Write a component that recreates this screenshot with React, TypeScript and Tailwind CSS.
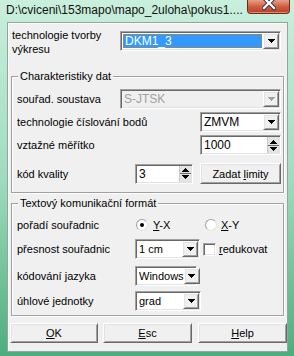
const sunken =
  "border border-t-[#a0a0a0] border-l-[#a0a0a0] border-r-white border-b-white shadow-[inset_1px_1px_0_#696969,inset_-1px_-1px_0_#e3e3e3] p-[1px]";
const raised =
  "border border-t-white border-l-white border-r-[#696969] border-b-[#696969] shadow-[inset_1px_1px_0_#e3e3e3,inset_-1px_-1px_0_#a0a0a0] bg-[#f0f0f0]";

function Arrow({ disabled = false }: { disabled?: boolean }) {
  return (
    <svg width="7" height="4" viewBox="0 0 7 4" shapeRendering="crispEdges">
      <path d="M0 0h7v1h-1v1h-1v1h-1v1h-1v-1h-1v-1h-1v-1h-1z" fill={disabled ? "#a0a0a0" : "#000"} />
    </svg>
  );
}

function DropButton({ disabled = false }: { disabled?: boolean }) {
  return (
    <div className={`${raised} w-[16px] h-full flex items-center justify-center shrink-0`}>
      <Arrow disabled={disabled} />
    </div>
  );
}

function SpinArrows() {
  return (
    <div className="w-[12px] h-full shrink-0 flex flex-col bg-[#e3e3e3] border-l border-[#c8c8c8]">
      <div className="flex-1 flex items-end justify-center pb-[1px] border-b border-[#696969]">
        <svg width="7" height="4" viewBox="0 0 7 4" shapeRendering="crispEdges">
          <path d="M3 0h1v1h1v1h1v1h1v1h-7v-1h1v-1h1v-1h1z" fill="#000" />
        </svg>
      </div>
      <div className="flex-1 flex items-start justify-center pt-[1px]">
        <svg width="7" height="4" viewBox="0 0 7 4" shapeRendering="crispEdges">
          <path d="M0 0h7v1h-1v1h-1v1h-1v1h-1v-1h-1v-1h-1v-1h-1z" fill="#000" />
        </svg>
      </div>
    </div>
  );
}

function Radio({ checked }: { checked: boolean }) {
  return (
    <span className="w-[12px] h-[12px] rounded-full bg-white border border-t-[#a0a0a0] border-l-[#a0a0a0] border-r-[#e3e3e3] border-b-[#e3e3e3] flex items-center justify-center">
      {checked && <span className="w-[4px] h-[4px] rounded-full bg-black" />}
    </span>
  );
}

export default function App() {
  return (
    <div className="w-[294px] h-[356px] flex flex-col bg-gradient-to-b from-[#c9efdd] via-[#a0dbbf] to-[#4cad7d] font-['Liberation_Sans',Arial,sans-serif] text-black overflow-hidden">
      {/* Title bar */}
      <div className="h-[22px] flex items-start justify-between pl-[6px] pr-[4px] shrink-0">
        <span className="text-[12px] leading-[14px] mt-[3px] text-[#111]">
          {"D:\\cviceni\\153mapo\\mapo_2uloha\\pokus1...."}
        </span>
        <div className="w-[43px] h-[14px] rounded-b-[4px] border border-t-0 border-[#6e2a1c] bg-gradient-to-b from-[#e6a088] via-[#cf5f42] to-[#b8401f] flex justify-center shadow-[inset_0_-1px_0_#e08a70]">
          <svg width="14" height="11" viewBox="0 0 14 11">
            <path d="M2 -2L12 8M12 -2L2 8" stroke="#3a3a48" strokeWidth="4.2" strokeLinecap="square" />
            <path d="M2 -2L12 8M12 -2L2 8" stroke="#fff" strokeWidth="2.2" strokeLinecap="square" />
          </svg>
        </div>
      </div>

      {/* Client area */}
      <div className="ml-[7px] w-[281px] h-[330px] bg-[#f0f0f0] border border-[#8fa89b] shadow-[inset_1px_1px_0_#fff] flex flex-col">
        <div className="flex items-start mt-[5px] ml-[4px]">
          <div className="w-[108px] text-[11px] leading-[14px]">
            technologie tvorby
            <br />
            výkresu
          </div>
          <div className={`mt-[3px] w-[161px] h-[20px] flex bg-white ${sunken}`}>
            <div className="flex-1 m-[1px] flex items-center bg-[#3399ff] border border-dotted border-[#d08000] text-white text-[12px] pl-[1px]">
              DKM1_3
            </div>
            <DropButton />
          </div>
        </div>

        {/* Charakteristiky dat */}
        <div className="relative ml-[3px] mt-[20px] w-[273px] h-[117px] border border-[#a0a0a0] shadow-[inset_1px_1px_0_#fff,1px_1px_0_#fff] pt-[12px] pl-[5px] pr-[2px] text-[11px] leading-[14px]">
          <span className="absolute -top-[8px] left-[6px] px-[2px] bg-[#f0f0f0]">Charakteristiky dat</span>

          <div className="flex items-center h-[20px]">
            <span className="w-[103px]">souřad. soustava</span>
            <div className={`w-[161px] h-[20px] flex bg-[#f0f0f0] ${sunken}`}>
              <div className="flex-1 flex items-center pl-[2px] text-[12px] text-[#a0a0a0]">S-JTSK</div>
              <DropButton disabled />
            </div>
          </div>

          <div className="flex items-center h-[20px] mt-[3px]">
            <span className="flex-1">technologie číslování bodů</span>
            <div className={`w-[81px] h-[20px] flex bg-white ${sunken}`}>
              <div className="flex-1 flex items-center pl-[2px] text-[12px]">ZMVM</div>
              <DropButton />
            </div>
          </div>

          <div className="flex items-center h-[20px] mt-[3px]">
            <span className="flex-1">vztažné měřítko</span>
            <div className={`w-[81px] h-[20px] flex bg-white ${sunken}`}>
              <div className="flex-1 flex items-center pl-[2px] text-[12px]">1000</div>
              <SpinArrows />
            </div>
          </div>

          <div className="flex items-center h-[21px] mt-[8px]">
            <span className="w-[118px]">kód kvality</span>
            <div className={`w-[58px] h-[20px] flex bg-white ${sunken}`}>
              <div className="flex-1 flex items-center pl-[2px] text-[12px]">3</div>
              <SpinArrows />
            </div>
            <button className={`ml-auto w-[81px] h-[21px] ${raised} flex items-center justify-center`}>
              Zadat <span className="underline underline-offset-[1px] ml-[3px]">l</span>imity
            </button>
          </div>
        </div>

        {/* Textový komunikační formát */}
        <div className="relative ml-[3px] mt-[10px] w-[273px] h-[113px] border border-[#a0a0a0] shadow-[inset_1px_1px_0_#fff,1px_1px_0_#fff] pt-[11px] pl-[5px] pr-[2px] text-[11px] leading-[14px]">
          <span className="absolute -top-[8px] left-[6px] px-[2px] bg-[#f0f0f0]">Textový komunikační formát</span>

          <div className="flex items-center h-[20px]">
            <span className="w-[119px]">pořadí souřadnic</span>
            <div className="w-[69px] flex items-center">
              <Radio checked />
              <span className="ml-[5px]">
                <span className="underline underline-offset-[1px]">Y</span>-X
              </span>
            </div>
            <div className="flex items-center">
              <Radio checked={false} />
              <span className="ml-[4px]">
                <span className="underline underline-offset-[1px]">X</span>-Y
              </span>
            </div>
          </div>

          <div className="flex items-center h-[20px] mt-[4px]">
            <span className="w-[118px]">přesnost souřadnic</span>
            <div className={`w-[65px] h-[20px] flex bg-white ${sunken}`}>
              <div className="flex-1 flex items-center pl-[2px]">1 cm</div>
              <DropButton />
            </div>
            <span className={`ml-[3px] w-[13px] h-[13px] bg-white ${sunken}`} />
            <span className="ml-[3px]">
              <span className="underline underline-offset-[1px]">r</span>edukovat
            </span>
          </div>

          <div className="flex items-center h-[20px] mt-[7px]">
            <span className="w-[118px]">kódování jazyka</span>
            <div className={`w-[62px] h-[20px] flex bg-white ${sunken}`}>
              <div className="flex-1 flex items-center pl-[2px]">Windows</div>
              <DropButton />
            </div>
          </div>

          <div className="flex items-center h-[20px] mt-[5px]">
            <span className="w-[118px]">úhlové jednotky</span>
            <div className={`w-[66px] h-[20px] flex bg-white ${sunken}`}>
              <div className="flex-1 flex items-center pl-[2px]">grad</div>
              <DropButton />
            </div>
          </div>
        </div>

        {/* Buttons */}
        <div className="flex ml-[2px] mt-[7px] text-[11px] leading-[14px]">
          <button className={`w-[88px] h-[20px] ${raised} flex items-center justify-center`}>
            <span className="underline underline-offset-[1px]">O</span>K
          </button>
          <button className={`ml-[5px] w-[89px] h-[20px] ${raised} flex items-center justify-center`}>
            <span className="underline underline-offset-[1px]">E</span>sc
          </button>
          <button className={`ml-[6px] w-[89px] h-[20px] ${raised} flex items-center justify-center`}>
            <span className="underline underline-offset-[1px]">H</span>elp
          </button>
        </div>
      </div>
    </div>
  );
}
